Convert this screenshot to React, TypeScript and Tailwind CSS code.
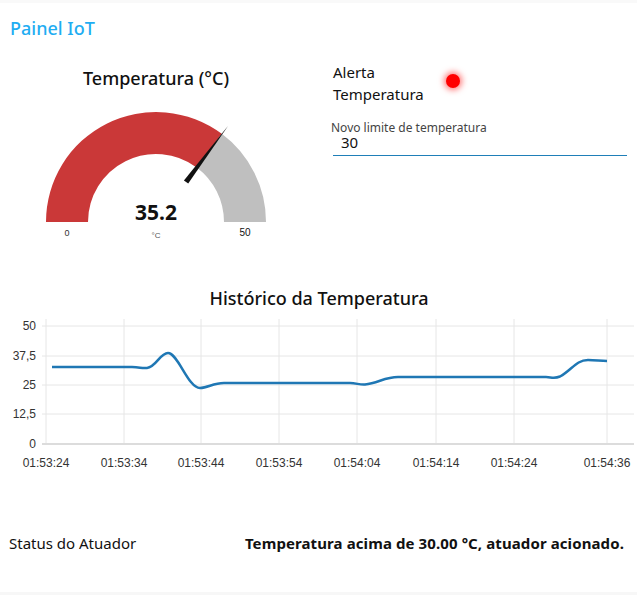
import React from 'react'

const yTicks = [
  { label: '50', y: 325 },
  { label: '37,5', y: 355 },
  { label: '25', y: 384 },
  { label: '12,5', y: 413 },
  { label: '0', y: 443 },
]

const xTicks = [
  { label: '01:53:24', x: 46 },
  { label: '01:53:34', x: 124 },
  { label: '01:53:44', x: 201 },
  { label: '01:53:54', x: 279 },
  { label: '01:54:04', x: 357 },
  { label: '01:54:14', x: 436 },
  { label: '01:54:24', x: 514 },
  { label: '01:54:36', x: 607 },
]

function Gauge() {
  return (
    <svg width="310" height="145" viewBox="0 100 310 145" className="block">
      <path d="M46,222 A110,110 0 0 1 221.8,133.8 L196.7,167.5 A68,68 0 0 0 88,222 Z" fill="#ca3838" />
      <path d="M221.8,133.8 A110,110 0 0 1 266,222 L224,222 A68,68 0 0 0 196.7,167.5 Z" fill="#bfbfbf" />
      <polygon points="188.2,183.6 183.9,180.4 228,126" fill="#111" />
      <text x="156" y="220" textAnchor="middle" fontSize="21" fontWeight="700" fill="#111" fontFamily="'Noto Sans', sans-serif">
        35.2
      </text>
      <text x="156" y="238" textAnchor="middle" fontSize="8" fill="#555" fontFamily="'Liberation Sans', Arial, sans-serif">
        °C
      </text>
      <text x="67" y="236" textAnchor="middle" fontSize="9" fill="#333" fontFamily="'Liberation Sans', Arial, sans-serif">
        0
      </text>
      <text x="245" y="236" textAnchor="middle" fontSize="10" fill="#111" fontFamily="'Liberation Sans', Arial, sans-serif">
        50
      </text>
    </svg>
  )
}

function Chart() {
  return (
    <svg width="637" height="170" viewBox="0 310 637 170" className="block">
      {yTicks.slice(0, 4).map((t) => (
        <line key={t.label} x1="42" x2="634" y1={t.y} y2={t.y} stroke="#e6e6e6" strokeWidth="1" />
      ))}
      {xTicks.map((t) => (
        <line key={t.label} x1={t.x} x2={t.x} y1="318" y2="443" stroke="#e6e6e6" strokeWidth="1" />
      ))}
      <line x1="42" x2="634" y1="443" y2="443" stroke="#dcdcdc" strokeWidth="2" />
      {yTicks.map((t) => (
        <text key={t.label} x="36" y={t.y + 4} textAnchor="end" fontSize="12" fill="#333" fontFamily="'Liberation Sans', Arial, sans-serif">
          {t.label}
        </text>
      ))}
      {xTicks.map((t) => (
        <text key={t.label} x={t.x} y="466" textAnchor="middle" fontSize="12" fill="#333" fontFamily="'Liberation Sans', Arial, sans-serif">
          {t.label}
        </text>
      ))}
      <path
        d="M52,366 L132,366 C140,366 141,367.5 147,367 C156,366 160,352 168,352 C178,352 188,387 200,387 C208,387 213,382 224,382 L350,382 C356,382 360,384 365,383.5 C378,382 385,376 398,376 L546,376 C551,376 554,378 560,375.5 C572,369 576,359 588,359 C596,359 600,360 607,360"
        fill="none"
        stroke="#1f77b4"
        strokeWidth="2.5"
        strokeLinejoin="round"
      />
    </svg>
  )
}

export default function App() {
  return (
    <div className="w-[637px] h-[595px] flex flex-col bg-white text-[#111] font-['Noto_Sans',sans-serif] overflow-hidden">
      <div className="h-[3px] bg-[#f9f9f9]" />
      <div className="h-[50px] pl-[10px] pt-[13px] text-[18px] leading-6 font-medium text-[#1fadf2]">Painel IoT</div>

      <div className="flex">
        <div className="w-[310px] flex flex-col items-center">
          <div className="w-[310px] pl-[2px] mt-[13px] text-center text-[18px] leading-6 font-medium">Temperatura (°C)</div>
          <div className="mt-[10px]">
            <Gauge />
          </div>
        </div>

        <div className="flex-1 pl-[23px] pr-[10px] pt-[8px] flex flex-col">
          <div className="flex items-start">
            <div className="w-[113px] text-[15px] leading-[22px]">
              <div>Alerta</div>
              <div>Temperatura</div>
            </div>
            <div className="mt-[13px] w-[14px] h-[14px] rounded-full bg-[#ff0000] shadow-[0_0_6px_2px_rgba(255,0,0,0.55)]" />
          </div>
          <div className="mt-[16px] -ml-[2px] text-[12px] leading-[13px] text-[#444]">Novo limite de temperatura</div>
          <div className="pl-[8px] pb-[5px] text-[15px] leading-[16px]">30</div>
          <div className="h-px bg-[#1f7fb8]" />
        </div>
      </div>

      <div className="mt-[41px] text-center text-[18px] leading-6 font-medium pl-[1px]">Histórico da Temperatura</div>
      <div className="mt-[1px]">
        <Chart />
      </div>

      <div className="mt-[52px] flex items-center justify-between pl-[9px] pr-[13px] text-[15px] leading-5">
        <span>Status do Atuador</span>
        <span className="font-bold tracking-[0.1px]">Temperatura acima de 30.00 °C, atuador acionado.</span>
      </div>
      <div className="flex-1" />
      <div className="h-[3px] bg-[#f7f7f7]" />
    </div>
  )
}
